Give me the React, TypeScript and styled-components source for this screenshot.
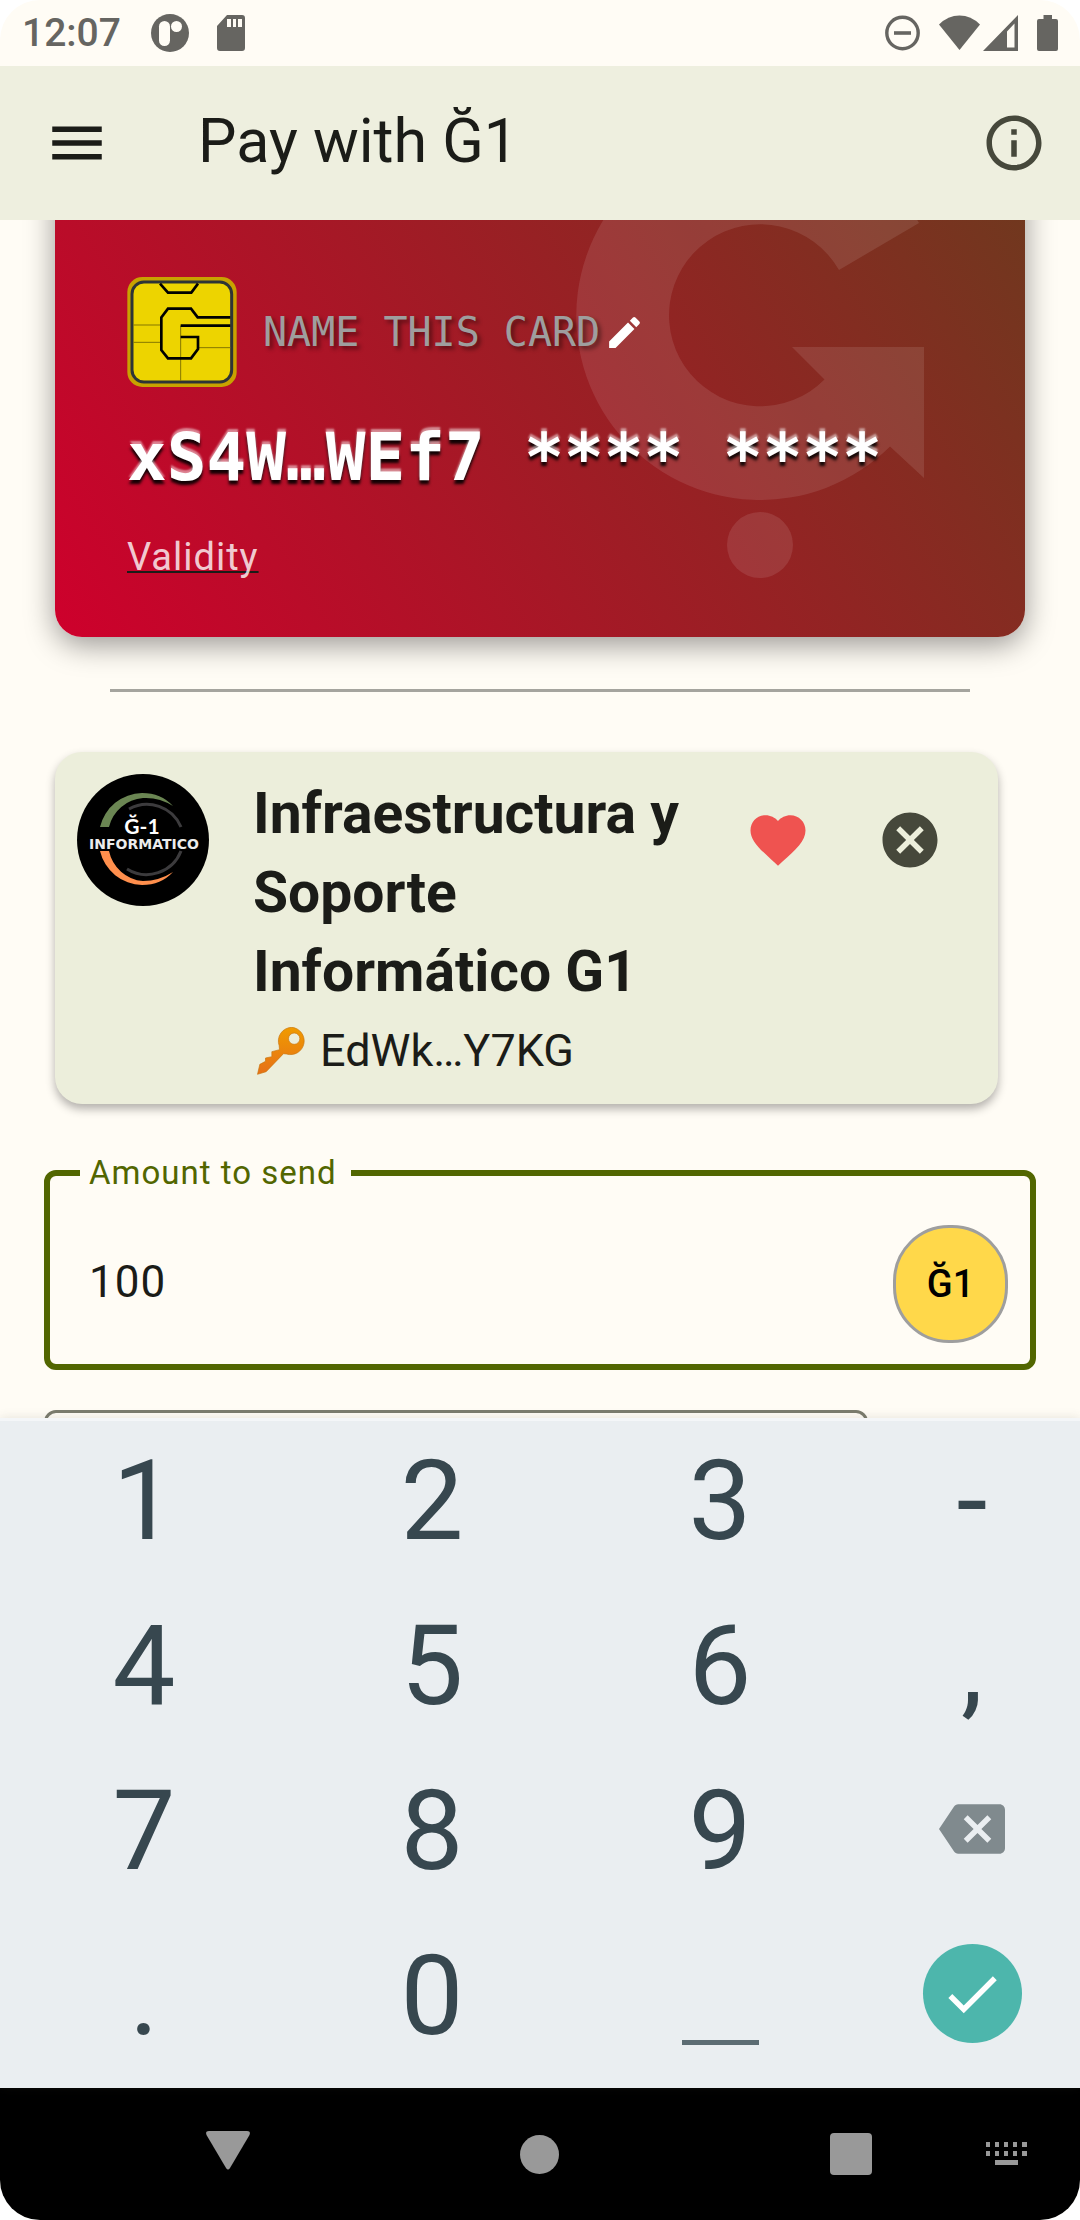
import React, { useState } from "react";
import styled, { createGlobalStyle } from "styled-components";
import {
  MdBackspace,
  MdCancel,
  MdCheck,
  MdEdit,
  MdFavorite,
  MdInfoOutline,
  MdMenu,
} from "react-icons/md";

const color = {
  surface: "#fffcf5",
  bar: "#eeefdf",
  tile: "#eceedb",
  ink: "#1b1c18",
  muted: "#46483b",
  status: "#666561",
  primary: "#526600",
  outline: "#7b7c6e",
  keypad: "#eaeef1",
  key: "#37474f",
  accent: "#4db6ac",
};

const GlobalStyle = createGlobalStyle`
  *, *::before, *::after { box-sizing: border-box; }
  body { margin: 0; background: #ffffff; font-family: Roboto, "Noto Sans", sans-serif; }
`;

const Screen = styled.div`
  display: flex;
  flex-direction: column;
  height: 100vh;
  overflow: hidden;
  border-radius: 40px;
  background: ${color.surface};
  color: ${color.ink};
`;

const PlainButton = styled.button`
  display: flex;
  align-items: center;
  justify-content: center;
  padding: 0;
  border: 0;
  background: none;
  color: inherit;
  font: inherit;
  cursor: pointer;
`;

/* Status bar */

const StatusBar = styled.div`
  display: flex;
  align-items: center;
  justify-content: space-between;
  height: 66px;
  flex: none;
  padding: 0 22px;
  color: ${color.status};
`;

const StatusGroup = styled.div<{ $gap: number }>`
  display: flex;
  align-items: center;
  gap: ${(p) => p.$gap}px;
`;

const Clock = styled.time`
  margin-right: 2px;
  font-size: 39px;
  font-weight: 500;
  line-height: 66px;
`;

/* App bar */

const AppBar = styled.header`
  display: flex;
  align-items: center;
  flex: none;
  height: 154px;
  padding: 0 33px 0 44px;
  background: ${color.bar};
`;

const Title = styled.h1`
  flex: 1;
  margin: 0 0 4px 88px;
  font-size: 61px;
  font-weight: 400;
  line-height: 77px;
`;

const BarButton = styled(PlainButton)`
  width: 66px;
  height: 66px;
`;

/* Scrolled page */

const Page = styled.main`
  flex: 1 1 0;
  min-height: 0;
  overflow: hidden;
`;

const WalletCard = styled.section`
  position: relative;
  display: flex;
  flex-direction: column;
  justify-content: flex-end;
  align-items: flex-start;
  min-height: 611px;
  margin: -194px 55px 0;
  padding: 0 72px 53px;
  border-radius: 27px;
  background: linear-gradient(58deg, #ce002c 0%, #683d1d 100%);
  box-shadow: 0 8px 30px rgba(0, 0, 0, 0.4);
`;

const Watermark = styled.svg`
  position: absolute;
  right: 101px;
  bottom: 59px;
  width: 348px;
  height: 447px;
`;

const NameRow = styled.div`
  position: relative;
  display: flex;
  align-items: center;
  gap: 26px;
`;

const NameButton = styled(PlainButton)`
  gap: 4px;
  color: #9e9e9e;
  font-family: "DejaVu Sans Mono", monospace;
  font-size: 40px;
  line-height: 54px;
  text-shadow: 3px 3px 4px rgba(0, 0, 0, 0.45);
`;

const EditIcon = styled(MdEdit)`
  color: #ffffff;
`;

const CardNumber = styled.p`
  position: relative;
  margin: 31px 0 32px;
  color: #ffffff;
  font-family: "DejaVu Sans Mono", monospace;
  font-size: 66px;
  font-weight: 700;
  line-height: 80px;
  white-space: nowrap;
  text-shadow: 0 -3px 2px rgba(255, 255, 255, 0.5), 0 4px 3px rgba(0, 0, 0, 0.9);
`;

const ValidityLink = styled.a`
  position: relative;
  color: rgba(255, 255, 255, 0.8);
  font-size: 38px;
  line-height: 54px;
  letter-spacing: 1px;
  text-decoration: underline ${color.ink} 2px;
  text-decoration-skip-ink: none;
  text-underline-offset: 1px;
`;

const Divider = styled.hr`
  height: 3px;
  margin: 52px 110px 0;
  border: 0;
  background: #a5a49e;
`;

const ContactCard = styled.section`
  display: flex;
  align-items: flex-start;
  margin: 60px 82px 0 55px;
  padding: 22px;
  border-radius: 27px;
  background: ${color.tile};
  box-shadow: 0 5px 10px rgba(0, 0, 0, 0.3);
`;

const ContactText = styled.div`
  flex: 1;
  margin-left: 44px;
`;

const ContactName = styled.h2`
  margin: 0;
  font-size: 57px;
  font-weight: 700;
  line-height: 79px;
`;

const ContactKey = styled.p`
  display: flex;
  align-items: center;
  gap: 14px;
  margin: 9px 0 0 3px;
  font-size: 45px;
  line-height: 62px;
`;

const ContactAction = styled(PlainButton)<{ $tint: string }>`
  width: 132px;
  height: 132px;
  color: ${(p) => p.$tint};
`;

const AmountField = styled.fieldset`
  min-width: 0;
  margin: 49px 44px 0;
  padding: 32px 22px 21px 39px;
  border: 6px solid ${color.primary};
  border-radius: 12px;
`;

const AmountLegend = styled.legend`
  margin-left: -9px;
  padding: 0 14px 0 9px;
  color: ${color.primary};
  font-size: 33px;
  line-height: 40px;
  letter-spacing: 1px;
`;

const AmountRow = styled.div`
  display: flex;
  align-items: center;
`;

const AmountInput = styled.input`
  flex: 1;
  min-width: 0;
  padding: 0 0 4px;
  border: 0;
  outline: 0;
  background: none;
  color: ${color.ink};
  font: inherit;
  font-size: 44px;
  line-height: 66px;
  letter-spacing: 1px;
`;

const CurrencyButton = styled(PlainButton)`
  width: 115px;
  height: 118px;
  border: 3px solid #9e9e9e;
  border-radius: 56px;
  background: #ffd84a;
  color: #000000;
  font-size: 38px;
  font-weight: 500;
`;

const NoteInput = styled.input`
  display: block;
  width: calc(100% - 256px);
  height: 165px;
  margin: 40px 0 0 44px;
  padding: 0 39px;
  border: 3px solid ${color.outline};
  border-radius: 12px;
  background: none;
  color: ${color.ink};
  font: inherit;
  font-size: 44px;
`;

/* Keypad */

const Keypad = styled.div`
  position: relative;
  display: grid;
  flex: none;
  grid-template-columns: 4fr 4fr 4fr 3fr;
  grid-auto-rows: 155px;
  row-gap: 10px;
  padding-bottom: 17px;
  border-top: 3px solid #f4f6f8;
  background: ${color.keypad};
  box-shadow: 0 0 10px rgba(70, 72, 59, 0.14);
`;

const Key = styled(PlainButton)`
  color: ${color.key};
  font-size: 112px;
  line-height: 155px;
`;

const CharKey = styled(Key)`
  padding-top: 3px;
`;

const DeleteKey = styled(Key)`
  color: #808a8e;
`;

const SpaceMark = styled.span`
  align-self: flex-end;
  width: 77px;
  height: 5px;
  margin-bottom: 26px;
  background: #5c6c73;
`;

const DoneDisc = styled.span`
  display: flex;
  align-items: center;
  justify-content: center;
  width: 99px;
  height: 99px;
  border-radius: 50%;
  background: ${color.accent};
  color: #ffffff;
`;

/* System navigation */

const NavBar = styled.nav`
  display: flex;
  flex: none;
  gap: 24px;
  height: 132px;
  padding: 0 7px 0 162px;
  background: #000000;
  color: #999999;
`;

const NavMain = styled.div`
  display: flex;
  flex: 1;
  justify-content: space-between;
`;

const NavButton = styled(PlainButton)`
  width: 132px;
  height: 132px;
`;

const StatusNotifications = () => (
  <>
    <svg width="38" height="38" viewBox="0 0 38 38" aria-hidden="true">
      <circle cx="19" cy="19" r="19" fill="currentColor" />
      <rect x="8" y="7" width="11" height="25" rx="5.5" fill={color.surface} />
      <circle cx="25.500" cy="12.500" r="5.500" fill={color.surface} />
    </svg>
    <svg width="28" height="36" viewBox="0 0 28 36" aria-hidden="true">
      <path
        d="M10 0H25Q28 0 28 3V33Q28 36 25 36H3Q0 36 0 33V11Z M10 4V12H14V4Z M16 4V12H19V4Z M21 4V12H25V4Z"
        fill="currentColor"
        fillRule="evenodd"
      />
    </svg>
  </>
);

const StatusSystem = () => (
  <>
    <svg width="35" height="36" viewBox="0 0 35 36" aria-hidden="true">
      <circle cx="17.500" cy="18" r="15.700" fill="none" stroke="currentColor" strokeWidth="3.400" />
      <path d="M9 18H26" stroke="currentColor" strokeWidth="3.600" />
    </svg>
    <StatusGroup $gap={3}>
      <svg width="41" height="36" viewBox="0 0 41 36" aria-hidden="true">
        <path d="M0 9.500Q9 0.500 20.500 0.500T41 9.500L20.500 35Z" fill="currentColor" />
      </svg>
      <svg width="35" height="36" viewBox="0 0 35 36" aria-hidden="true">
        <path d="M35 0V36H0Z M31.500 8.500L24 16.500V32.500H31.500Z" fill="currentColor" fillRule="evenodd" />
      </svg>
    </StatusGroup>
    <svg width="21" height="36" viewBox="0 0 21 36" aria-hidden="true">
      <path d="M6.500 0H15V4H19Q21 4 21 6V34Q21 36 19 36H2Q0 36 0 34V6Q0 4 2 4H6.500Z" fill="currentColor" />
    </svg>
  </>
);

const GWatermark = () => (
  <Watermark viewBox="576 131 348 447" aria-hidden="true">
    <g fill="#ffffff" fillOpacity="0.1">
      <path d="M919 223A184 184 0 1 0 890 446.500L924 478V347H792L824.500 379.500A91 91 0 1 1 839 270Z" />
      <circle cx="760" cy="545" r="33" />
    </g>
  </Watermark>
);

const Chip = () => (
  <svg width="110" height="110" viewBox="0 0 328 330" aria-hidden="true">
    <rect width="328" height="330" rx="45" fill="#c8a200" />
    <rect x="14" y="15" width="299" height="300" rx="36" fill="#edd400" stroke="#2e3436" strokeWidth="9" />
    <path
      d="M160 146V312M18 144H101M18 196H101M211 212H309"
      fill="none"
      stroke="#857700"
      strokeWidth="3"
    />
    <path
      d="M98 20L122 47H192L212 20M309 121H211L191 95H122L102 121V219L122 244H191L212 216V180H160M160 146H309"
      fill="none"
      stroke="#000000"
      strokeWidth="8"
    />
  </svg>
);

const Avatar = () => (
  <svg width="132" height="132" viewBox="0 0 132 132" role="img" aria-label="Ğ-1 Informatico">
    <circle cx="66" cy="66" r="66" fill="#000000" />
    <path d="M23 53A44 44 0 0 1 65 19Q84 19 96 32Q82 23 66 24A38 38 0 0 0 32 53Z" fill="#6b8653" />
    <path d="M23 77A44 44 0 0 0 65 111Q84 111 96 98Q82 107 66 107A38 38 0 0 1 32 77Z" fill="#ff8f4d" />
    <path d="M52 35A37 37 0 0 1 104 53M104 77A37 37 0 0 1 50 95" fill="none" stroke="#3c3b3d" strokeWidth="3" />
    <text x="65" y="60" textAnchor="middle" fill="#ffffff" fontFamily="Lato, sans-serif" fontWeight="700" fontSize="21">
      Ğ-1
    </text>
    <text x="67" y="75" textAnchor="middle" fill="#ececec" fontFamily="'DejaVu Sans', sans-serif" fontWeight="700" fontSize="14">
      INFORMATICO
    </text>
  </svg>
);

const KeyIcon = () => (
  <svg width="50" height="48" viewBox="0 0 149 144" aria-hidden="true">
    <defs>
      <linearGradient id="key-fill" x1="0" y1="0" x2="0" y2="1">
        <stop offset="0" stopColor="#f09b00" />
        <stop offset="1" stopColor="#e67017" />
      </linearGradient>
    </defs>
    <path
      d="M107 1A41 41 0 1 1 91 81L82 80L30 134L4 142L11 112L28 103V93L47 89V74L70 68L69 56A41 41 0 0 1 107 1ZM114 18A17 17 0 1 0 114 52A17 17 0 1 0 114 18Z"
      fill="url(#key-fill)"
      stroke="#c9750f"
      strokeWidth="2"
      fillRule="evenodd"
    />
  </svg>
);

const BackGlyph = () => (
  <svg width="44" height="48" viewBox="0 0 44 48" aria-hidden="true">
    <path d="M3 1H41Q45 1 43.500 5L24 38Q22 41 20 38L0.500 5Q-1 1 3 1Z" fill="currentColor" />
  </svg>
);

const HomeGlyph = () => (
  <svg width="39" height="39" viewBox="0 0 39 39" aria-hidden="true">
    <circle cx="19.500" cy="19.500" r="19.500" fill="currentColor" />
  </svg>
);

const RecentGlyph = () => (
  <svg width="42" height="42" viewBox="0 0 42 42" aria-hidden="true">
    <rect width="42" height="42" rx="4" fill="currentColor" />
  </svg>
);

const KeyboardGlyph = () => (
  <svg width="42" height="24" viewBox="0 0 42 24" aria-hidden="true">
    <path
      d="M0 0H4V5H0ZM9 0H13V5H9ZM18 0H22V5H18ZM27 0H31V5H27ZM36 0H41V5H36ZM0 9H4V14H0ZM9 9H13V14H9ZM18 9H22V14H18ZM27 9H31V14H27ZM36 9H41V14H36ZM9 18H32V23H9Z"
      fill="currentColor"
    />
  </svg>
);

const keyRows = [
  ["1", "2", "3", "-"],
  ["4", "5", "6", ","],
  ["7", "8", "9", "delete"],
  [".", "0", "space", "done"],
];

export default function App() {
  const [amount, setAmount] = useState("100");
  const [note, setNote] = useState("");

  const renderKey = (key: string) => {
    switch (key) {
      case "delete":
        return (
          <DeleteKey key={key} type="button" aria-label="Delete" onClick={() => setAmount((v) => v.slice(0, -1))}>
            <MdBackspace size={66} />
          </DeleteKey>
        );
      case "space":
        return (
          <Key key={key} type="button" aria-label="Space">
            <SpaceMark />
          </Key>
        );
      case "done":
        return (
          <Key key={key} type="button" aria-label="Done">
            <DoneDisc>
              <MdCheck size={66} />
            </DoneDisc>
          </Key>
        );
      default:
        return (
          <CharKey key={key} type="button" onClick={() => setAmount((v) => v + key)}>
            {key}
          </CharKey>
        );
    }
  };

  return (
    <>
      <GlobalStyle />
      <Screen>
        <StatusBar>
          <StatusGroup $gap={28}>
            <Clock>12:07</Clock>
            <StatusNotifications />
          </StatusGroup>
          <StatusGroup $gap={19}>
            <StatusSystem />
          </StatusGroup>
        </StatusBar>

        <AppBar>
          <BarButton type="button" aria-label="Menu">
            <MdMenu size={66} />
          </BarButton>
          <Title>Pay with Ğ1</Title>
          <BarButton type="button" aria-label="Information">
            <MdInfoOutline size={66} color={color.muted} />
          </BarButton>
        </AppBar>

        <Page>
          <WalletCard>
            <GWatermark />
            <NameRow>
              <Chip />
              <NameButton type="button">
                NAME THIS CARD
                <EditIcon size={41} />
              </NameButton>
            </NameRow>
            <CardNumber>xS4W…WEf7 **** ****</CardNumber>
            <ValidityLink href="#validity">Validity</ValidityLink>
          </WalletCard>

          <Divider />

          <ContactCard>
            <Avatar />
            <ContactText>
              <ContactName>Infraestructura y Soporte Informático G1</ContactName>
              <ContactKey>
                <KeyIcon />
                EdWk…Y7KG
              </ContactKey>
            </ContactText>
            <ContactAction type="button" aria-label="Favorite" $tint="#ef5350">
              <MdFavorite size={66} />
            </ContactAction>
            <ContactAction type="button" aria-label="Remove" $tint={color.muted}>
              <MdCancel size={66} />
            </ContactAction>
          </ContactCard>

          <AmountField>
            <AmountLegend>
              <label htmlFor="amount">Amount to send</label>
            </AmountLegend>
            <AmountRow>
              <AmountInput
                id="amount"
                inputMode="decimal"
                value={amount}
                onChange={(e) => setAmount(e.target.value)}
              />
              <CurrencyButton type="button">Ğ1</CurrencyButton>
            </AmountRow>
          </AmountField>

          <NoteInput aria-label="Note" value={note} onChange={(e) => setNote(e.target.value)} />
        </Page>

        <Keypad>{keyRows.flat().map(renderKey)}</Keypad>

        <NavBar>
          <NavMain>
            <NavButton type="button" aria-label="Back">
              <BackGlyph />
            </NavButton>
            <NavButton type="button" aria-label="Home">
              <HomeGlyph />
            </NavButton>
            <NavButton type="button" aria-label="Recent apps">
              <RecentGlyph />
            </NavButton>
          </NavMain>
          <NavButton type="button" aria-label="Switch keyboard">
            <KeyboardGlyph />
          </NavButton>
        </NavBar>
      </Screen>
    </>
  );
}
